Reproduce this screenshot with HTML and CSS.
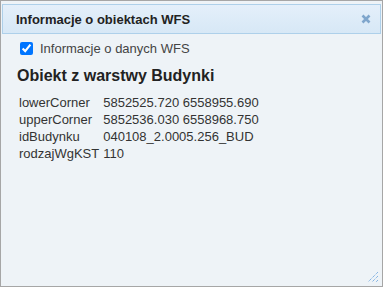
FILE: index.html
```html
<!DOCTYPE html>
<html>
<head>
<meta charset="utf-8">
<link rel="stylesheet" href="styles.css">
</head>
<body>
<div class="dialog">
  <div class="titlebar">
    <span class="title">Informacje o obiektach WFS</span>
    <span class="close"><svg width="10" height="10" viewBox="0 0 10 10"><path d="M1.5 1.5L8.5 8.5M8.5 1.5L1.5 8.5" stroke="#7fa6cc" stroke-width="2.6" stroke-linecap="butt"/></svg></span>
  </div>
  <div class="content">
    <label class="check"><input type="checkbox" checked> Informacje o danych WFS</label>
    <h2 class="heading">Obiekt z warstwy Budynki</h2>
    <table class="attrs">
      <tr><td>lowerCorner</td><td>5852525.720 6558955.690</td></tr>
      <tr><td>upperCorner</td><td>5852536.030 6558968.750</td></tr>
      <tr><td>idBudynku</td><td>040108_2.0005.256_BUD</td></tr>
      <tr><td>rodzajWgKST</td><td>110</td></tr>
    </table>
  </div>
  <svg class="grip" width="12" height="12" viewBox="0 0 12 12">
    <path d="M11 1L1 11M11 5L5 11M11 9L9 11" stroke="#5b9bdc" stroke-width="1" stroke-dasharray="1 1"/>
  </svg>
</div>
</body>
</html>
```
FILE: styles.css
```css
html, body { margin: 0; padding: 0; }
body { font-family: Arial, "Liberation Sans", sans-serif; }
.dialog {
  position: relative;
  width: 383px;
  height: 287px;
  box-sizing: border-box;
  border: 1px solid #a6a6a6;
  background: #eef3f7;
  padding: 3px 1px 0 1px;
}
.titlebar {
  display: flex;
  align-items: center;
  justify-content: space-between;
  height: 28px;
  border: 1px solid #aed0ea;
  background: linear-gradient(#e4effa, #d7e8f6);
  padding: 0 9px 0 13px;
  box-sizing: content-box;
}
.title { font-weight: bold; font-size: 13px; color: #222; }
.close { display: flex; }
.content { padding: 7px 0 0 17px; color: #333; font-size: 13px; }
.check { display: flex; align-items: center; color: #444; }
.check input { margin: 0 7px 0 1px; width: 13px; height: 13px; }
.heading { font-size: 16px; font-weight: bold; margin: 11px 0 0 -2px; color: #222; }
.attrs { border-collapse: collapse; margin-top: 9px; }
.attrs td { padding: 0 4px 0 0; height: 17px; }
.grip { position: absolute; right: 3px; bottom: 3px; }
```
